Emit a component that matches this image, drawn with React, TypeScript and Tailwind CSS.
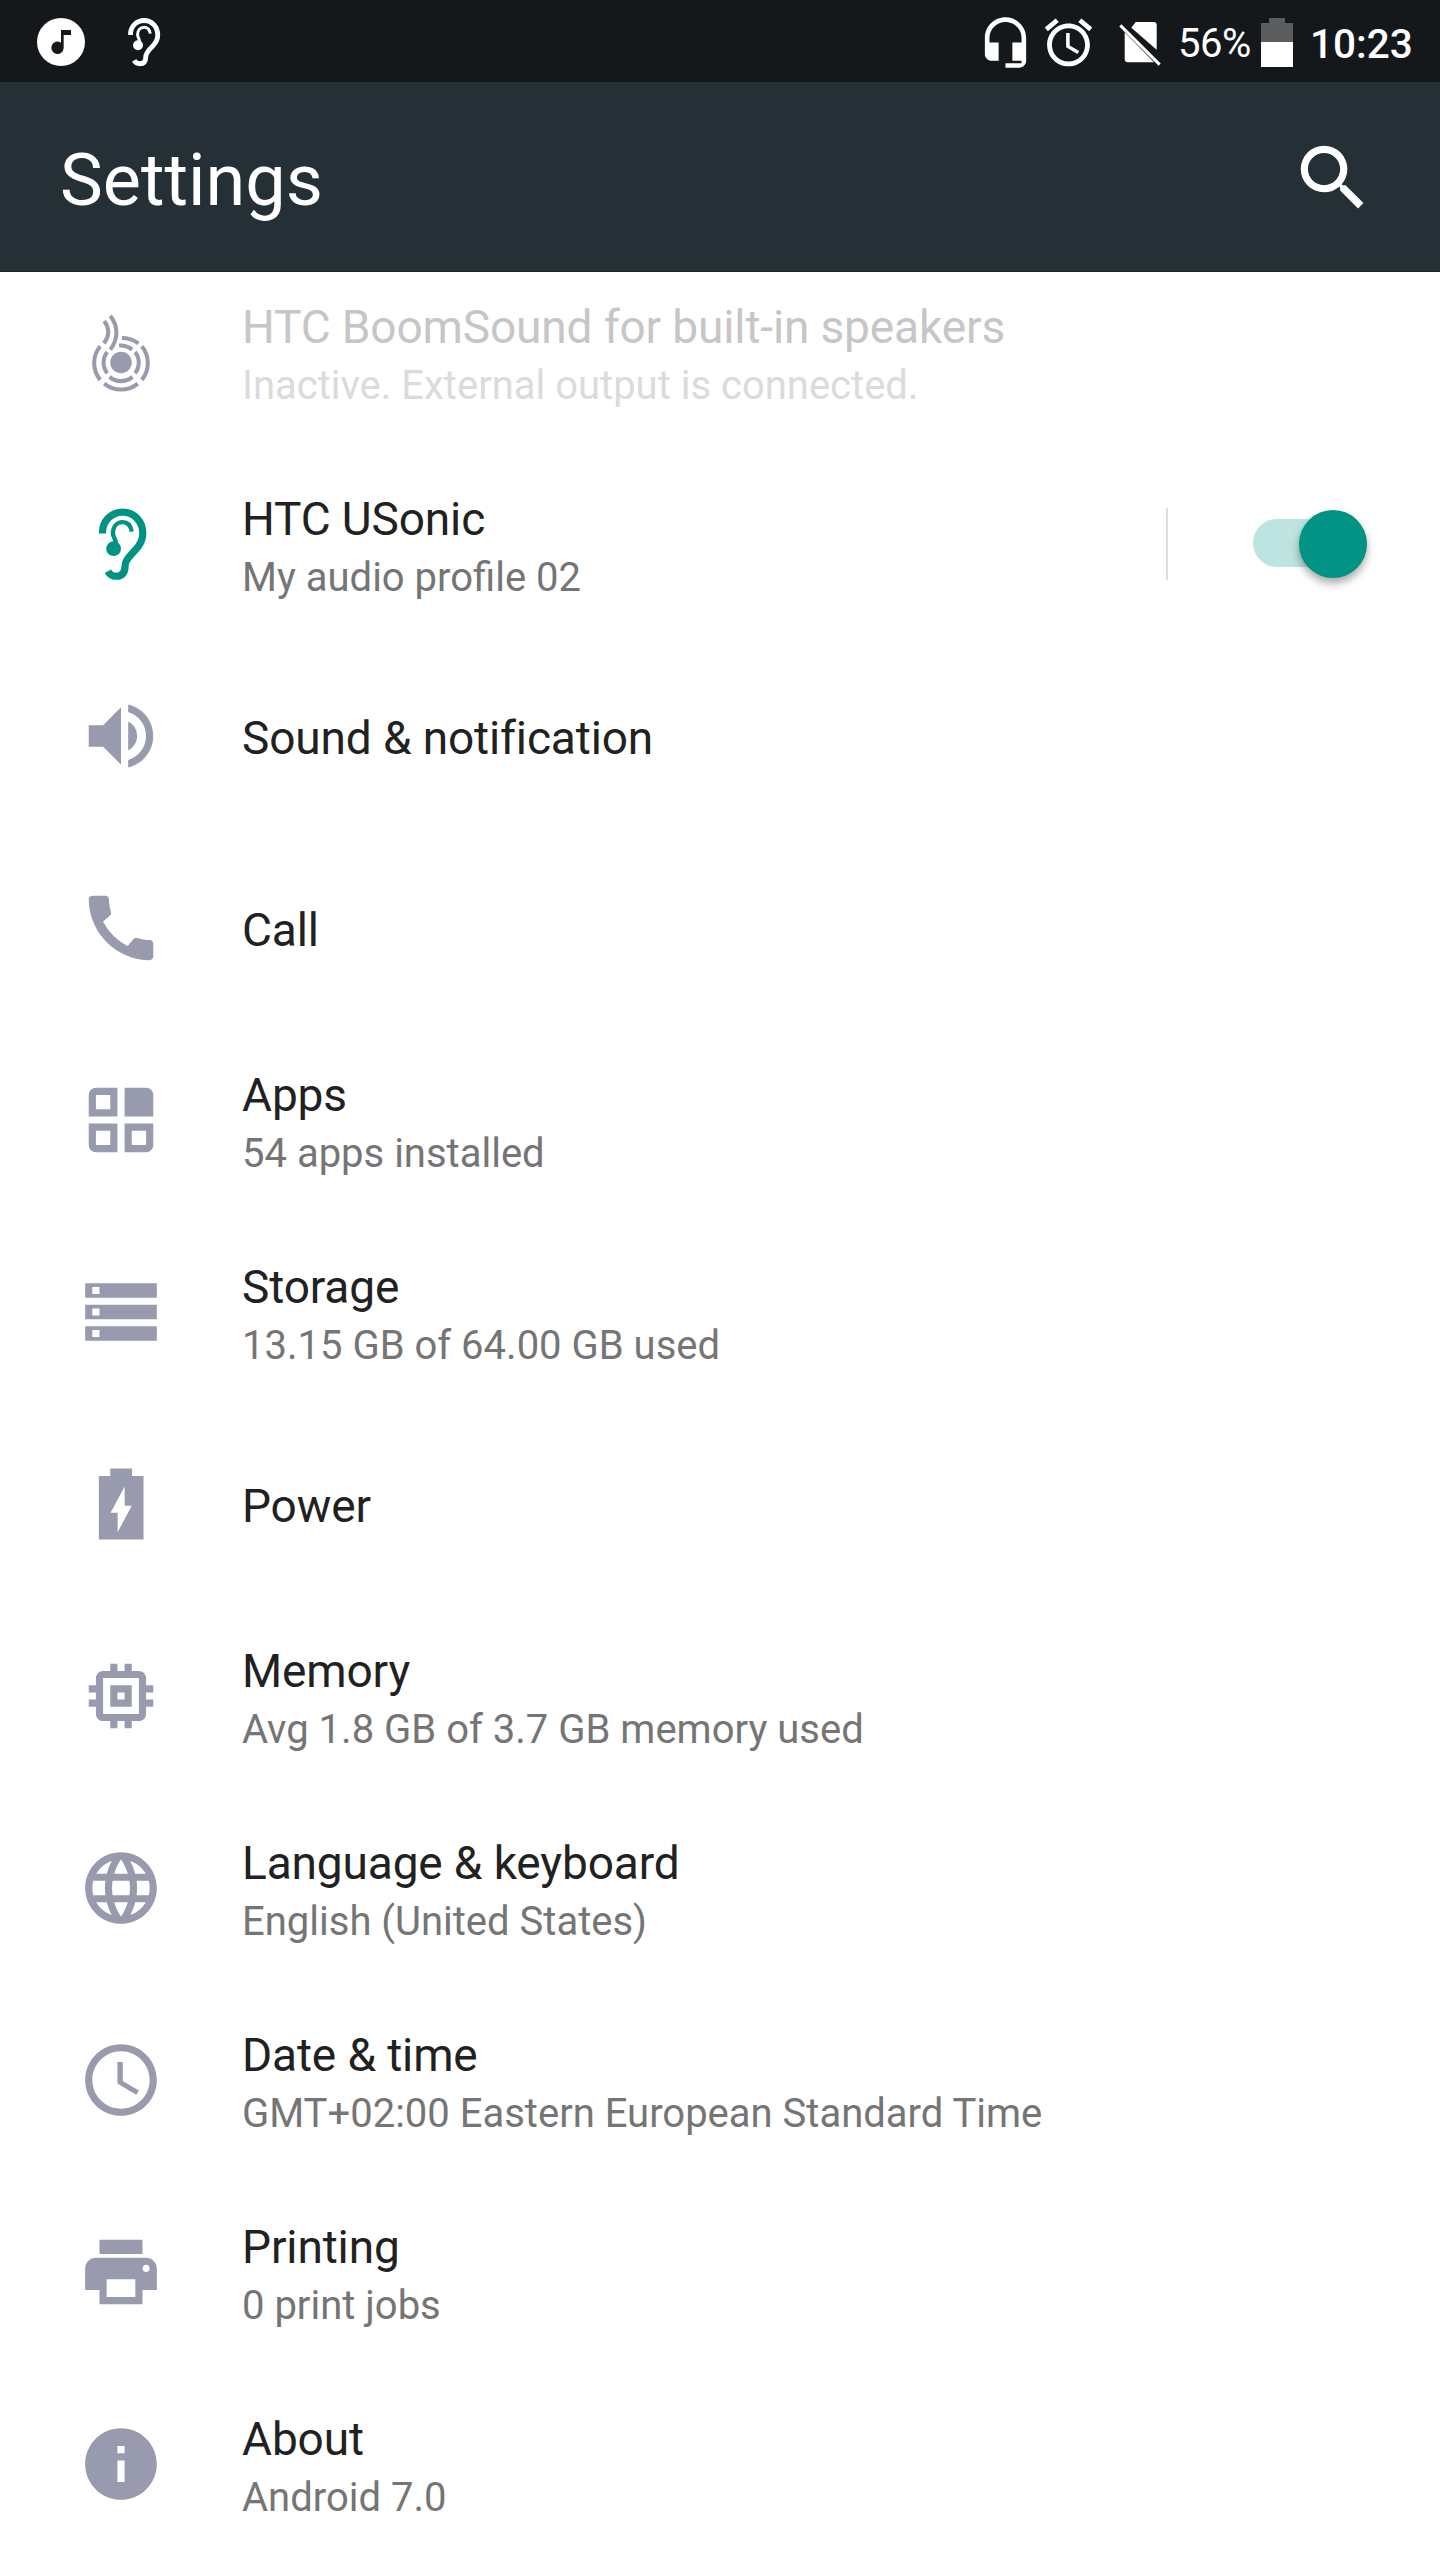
import classNames from 'clsx';
import { ReactNode, useState } from 'react';
import {
  MdAccessTime,
  MdCall,
  MdInfo,
  MdLanguage,
  MdMemory,
  MdPrint,
  MdSearch,
  MdStorage,
  MdVolumeUp,
} from 'react-icons/md';

const ICON_CLASS = 'size-[86px] shrink-0';

const EarIcon = ({ className }: { className?: string }) => (
  <svg viewBox="55 634 256 256" className={className} fill="none">
    <path
      d="M128 731V727C128 693 155 667 188 667C222 667 248 695 248 731C248 755 237 769 223 783C207 800 195 811 195 829C195 847 187 858 169 858C157 858 149 852 144 843"
      stroke="currentColor"
      strokeWidth="21.5"
    />
    <path
      d="M215 725C212 707 203 697 188 697C170 697 159 711 159 730C159 742 168 747 168 762"
      stroke="currentColor"
      strokeWidth="13"
    />
    <circle cx="161" cy="776" r="22" fill="currentColor" />
  </svg>
);

const BoomSoundIcon = () => (
  <svg viewBox="55 58 256 256" className={ICON_CLASS} fill="none">
    <circle cx="183" cy="217" r="32" fill="currentColor" />
    <g stroke="currentColor" strokeWidth="12">
      {/* outer ring */}
      <path d="M186 144C205 144 221 150 235 160" />
      <path d="M121 169A79 79 0 0 0 121 269" />
      <path d="M245 169A79 79 0 0 1 245 269" />
      <path d="M133 280A79 79 0 0 0 233 280" />
      {/* inner ring */}
      <path d="M177 167C192 165 205 170 216 179" />
      <path d="M142 186A51 51 0 0 0 142 249" />
      <path d="M225 186A51 51 0 0 1 225 249" />
      <path d="M149 260A52 52 0 0 0 217 260" />
      {/* tail */}
      <path d="M133 94C149 115 149 139 132 160" />
      <path d="M151 78C177 112 174 149 151 179" />
    </g>
  </svg>
);

const AppsIcon = () => (
  <svg viewBox="0 0 24 24" className={ICON_CLASS} fill="currentColor">
    <path
      fillRule="evenodd"
      d="M5 3h6v8H3V5a2 2 0 0 1 2-2zM5 5v4h4V5zM13 3h6a2 2 0 0 1 2 2v6h-8zM3 13h8v8H5a2 2 0 0 1-2-2zM5 15v4h4v-4zM13 13h8v6a2 2 0 0 1-2 2h-6zM15 15v4h4v-4z"
    />
  </svg>
);

const PowerIcon = () => (
  <svg viewBox="55 604 256 256" className={ICON_CLASS} fill="currentColor">
    <path
      fillRule="evenodd"
      d="M151 626H216V649H250V838H117V649H151zM194 680L152 758H173V816L215 737H194z"
    />
  </svg>
);

const HeadsetIcon = () => (
  <svg viewBox="0 0 24 24" className="size-[55px]" fill="currentColor">
    <path d="M12 1c-4.97 0-9 4.03-9 9v7c0 1.66 1.34 3 3 3h3v-8H5v-2c0-3.87 3.13-7 7-7s7 3.13 7 7v2h-4v8h4v1h-7v2h6c1.66 0 3-1.34 3-3V10c0-4.97-4.03-9-9-9z" />
  </svg>
);

const AlarmIcon = () => (
  <svg viewBox="0 0 24 24" className="size-[57px]" fill="currentColor">
    <path d="M22 5.72l-4.6-3.86-1.29 1.53 4.6 3.86L22 5.72zM7.88 3.39L6.6 1.86 2 5.71l1.29 1.53 4.59-3.85zM12.5 8H11v6l4.75 2.85.75-1.23-4-2.37V8zM12 4c-4.97 0-9 4.03-9 9s4.02 9 9 9c4.97 0 9-4.03 9-9s-4.03-9-9-9zm0 16c-3.87 0-7-3.13-7-7s3.13-7 7-7 7 3.13 7 7-3.13 7-7 7z" />
  </svg>
);

const NoSimIcon = () => (
  <svg viewBox="0 0 126 132" className="h-11 w-[42px]" fill="currentColor">
    <path d="M50 0H104Q113 0 113 9V83L37 17z" />
    <path d="M17 31L105 121H27Q17 121 17 111z" />
    <path d="M4 10L122 128" stroke="currentColor" strokeWidth="9" />
  </svg>
);

const BatteryIcon = () => (
  <svg viewBox="0 0 96 147" className="h-[49px] w-8">
    <path d="M24 0H72V15H96V72H0V15H24z" fill="#5b5d5f" />
    <path d="M0 72H96V147H0z" fill="#fff" />
  </svg>
);

const MusicIcon = () => (
  <svg viewBox="0 0 144 144" className="size-12">
    <circle cx="72" cy="72" r="72" fill="#fff" />
    <path
      d="M72 36H102V51H80V90A18.500 18.500 0 1 1 72 74z"
      fill="#14181b"
    />
  </svg>
);

const StatusBar = () => (
  <div className="flex h-[82px] w-full items-center bg-[#14181b] pt-[2px] pl-[37px] pr-7 text-white">
    <MusicIcon />
    <EarIcon className="ml-[29px] size-[58px]" />
    <div className="ml-auto flex items-center">
      <HeadsetIcon />
      <span className="ml-[7px] flex">
        <AlarmIcon />
      </span>
      <span className="ml-[22px] flex pt-[3px]">
        <NoSimIcon />
      </span>
      <span className="ml-[17px] w-[73px] pt-[4px] text-[40px] leading-none tracking-[-0.5px] whitespace-nowrap">
        56%
      </span>
      <span className="ml-[10px] flex">
        <BatteryIcon />
      </span>
      <span className="ml-[17px] w-[102px] pt-[4px] text-[40.5px] leading-none font-medium">
        10:23
      </span>
    </div>
  </div>
);

const Switch = ({
  checked,
  onChange,
}: {
  checked: boolean;
  onChange: (v: boolean) => void;
}) => (
  <button
    role="switch"
    aria-checked={checked}
    onClick={() => onChange(!checked)}
    className={classNames(
      'flex h-12 w-[114px] -translate-y-px items-center rounded-full',
      {
        'justify-end bg-[#bde4e0]': checked,
        'justify-start bg-gray-300': !checked,
      }
    )}
  >
    <span
      className={classNames(
        'size-[68px] shrink-0 translate-y-px rounded-full shadow-[0_5px_8px_rgba(0,0,0,0.35)]',
        checked ? 'bg-[#009384]' : 'bg-gray-50'
      )}
    />
  </button>
);

type Setting = {
  title: string;
  summary?: string;
  icon: ReactNode;
  disabled?: boolean;
  active?: boolean;
};

const SETTINGS: Setting[] = [
  {
    title: 'HTC BoomSound for built-in speakers',
    summary: 'Inactive. External output is connected.',
    icon: <BoomSoundIcon />,
    disabled: true,
  },
  {
    title: 'HTC USonic',
    summary: 'My audio profile 02',
    icon: <EarIcon className={ICON_CLASS} />,
    active: true,
  },
  { title: 'Sound & notification', icon: <MdVolumeUp className={ICON_CLASS} /> },
  { title: 'Call', icon: <MdCall className={ICON_CLASS} /> },
  { title: 'Apps', summary: '54 apps installed', icon: <AppsIcon /> },
  {
    title: 'Storage',
    summary: '13.15 GB of 64.00 GB used',
    icon: <MdStorage className={ICON_CLASS} />,
  },
  { title: 'Power', icon: <PowerIcon /> },
  {
    title: 'Memory',
    summary: 'Avg 1.8 GB of 3.7 GB memory used',
    icon: <MdMemory className={ICON_CLASS} />,
  },
  {
    title: 'Language & keyboard',
    summary: 'English (United States)',
    icon: <MdLanguage className={ICON_CLASS} />,
  },
  {
    title: 'Date & time',
    summary: 'GMT+02:00 Eastern European Standard Time',
    icon: <MdAccessTime className={ICON_CLASS} />,
  },
  {
    title: 'Printing',
    summary: '0 print jobs',
    icon: <MdPrint className={ICON_CLASS} />,
  },
  {
    title: 'About',
    summary: 'Android 7.0',
    icon: <MdInfo className={ICON_CLASS} />,
  },
];

const SettingRow = ({
  setting,
  children,
}: {
  setting: Setting;
  children?: ReactNode;
}) => (
  <div className="flex h-48 w-full items-center pr-[73px] pl-[78px]">
    <div
      className={classNames('flex', {
        'text-[#009384]': setting.active,
        'text-[#979bad]': !setting.active,
      })}
    >
      {setting.icon}
    </div>
    <div className="ml-[78px] grow pt-[3px] whitespace-nowrap">
      <div
        className={classNames(
          'text-[46px] leading-[64px] tracking-[-0.13px]',
          {
            'text-[#c6c6c6]': setting.disabled,
            'text-[#212121]': !setting.disabled,
          }
        )}
      >
        {setting.title}
      </div>
      {setting.summary && (
        <div
          className={classNames('text-[40px] leading-[54px]', {
            'text-[#dbdbdb]': setting.disabled,
            'text-[#757575]': !setting.disabled,
          })}
        >
          {setting.summary}
        </div>
      )}
    </div>
    {children}
  </div>
);

export default function App() {
  const [usonic, setUsonic] = useState(true);

  return (
    <div className="flex h-[2560px] w-[1440px] flex-col overflow-hidden bg-white font-[Roboto,sans-serif]">
      <StatusBar />
      <header className="relative z-10 flex h-[190px] w-full shrink-0 items-center justify-between border-b border-[#1c2429] bg-[#253036] pr-16 pl-[60px] text-white">
        <h1 className="pt-[8px] text-[72px] leading-none">Settings</h1>
        <span className="flex pt-[2px]">
          <MdSearch className={ICON_CLASS} />
        </span>
      </header>
      {/* The list is scrolled a little under the header */}
      <main className="-mt-4 flex flex-col">
        {SETTINGS.map((s) => (
          <SettingRow key={s.title} setting={s}>
            {s.active && (
              <>
                <div className="mr-[85px] h-[72px] w-[2px] bg-[#dddddd]" />
                <Switch checked={usonic} onChange={setUsonic} />
              </>
            )}
          </SettingRow>
        ))}
      </main>
    </div>
  );
}
